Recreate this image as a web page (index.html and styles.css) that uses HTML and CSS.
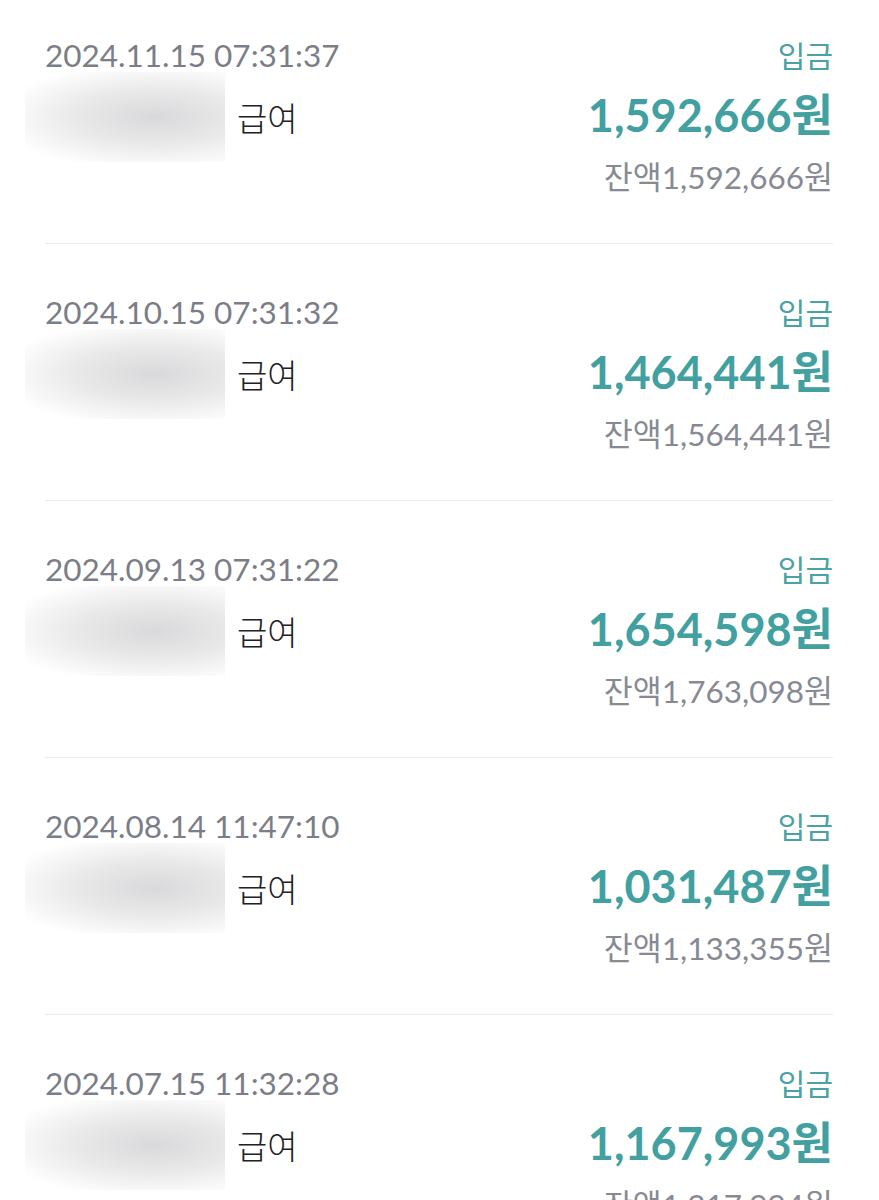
FILE: index.html
```html
<!DOCTYPE html>
<html lang="ko">
<head>
  <meta charset="UTF-8" />
  <meta name="viewport" content="width=device-width, initial-scale=1" />
  <title>거래내역</title>
  <link rel="stylesheet" href="styles.css">
</head>
<body>
  <ul class="history">
    <li class="item">
      <div class="left">
        <div class="date">2024.11.15 07:31:37</div>
        <div class="name"><span class="masked"></span>급여</div>
      </div>
      <div class="right">
        <div class="type">입금</div>
        <div class="amount">1,592,666원</div>
        <div class="balance">잔액1,592,666원</div>
      </div>
    </li>
    <li class="item">
      <div class="left">
        <div class="date">2024.10.15 07:31:32</div>
        <div class="name"><span class="masked"></span>급여</div>
      </div>
      <div class="right">
        <div class="type">입금</div>
        <div class="amount">1,464,441원</div>
        <div class="balance">잔액1,564,441원</div>
      </div>
    </li>
    <li class="item">
      <div class="left">
        <div class="date">2024.09.13 07:31:22</div>
        <div class="name"><span class="masked"></span>급여</div>
      </div>
      <div class="right">
        <div class="type">입금</div>
        <div class="amount">1,654,598원</div>
        <div class="balance">잔액1,763,098원</div>
      </div>
    </li>
    <li class="item">
      <div class="left">
        <div class="date">2024.08.14 11:47:10</div>
        <div class="name"><span class="masked"></span>급여</div>
      </div>
      <div class="right">
        <div class="type">입금</div>
        <div class="amount">1,031,487원</div>
        <div class="balance">잔액1,133,355원</div>
      </div>
    </li>
    <li class="item">
      <div class="left">
        <div class="date">2024.07.15 11:32:28</div>
        <div class="name"><span class="masked"></span>급여</div>
      </div>
      <div class="right">
        <div class="type">입금</div>
        <div class="amount">1,167,993원</div>
        <div class="balance">잔액1,217,994원</div>
      </div>
    </li>
  </ul>
</body>
</html>
```

FILE: styles.css
```css
body {
  margin: 0;
  background: #fff;
  font-family: Lato, "Noto Sans CJK KR", sans-serif;
  overflow: hidden;
}
.history {
  list-style: none;
  margin: 0 46px 0 45px;
  padding: 0;
}
.item {
  display: flex;
  justify-content: space-between;
  padding: 43px 0 39px;
  border-bottom: 1px solid #e9e9eb;
}
.item:first-child {
  padding-top: 30px;
}
.left {
  display: flex;
  flex-direction: column;
}
.date {
  height: 50px;
  line-height: 50px;
  font-size: 31.5px;
  color: #7b7e87;
  white-space: nowrap;
}
.name {
  display: flex;
  align-items: center;
  height: 74px;
  font-size: 33px;
  font-weight: 300;
  color: #222224;
}
.masked {
  display: inline-block;
  width: 200px;
  height: 90px;
  margin-left: -20px;
  margin-right: 12px;
  background: radial-gradient(ellipse 80% 60% at 65% 50%, #d9d9db 0%, #e9e9ea 50%, rgba(255, 255, 255, 0) 100%);
}
.right {
  display: flex;
  flex-direction: column;
  align-items: flex-end;
}
.type {
  height: 50px;
  line-height: 50px;
  font-size: 30px;
  color: #4aa2a2;
}
.amount {
  height: 70px;
  line-height: 70px;
  font-size: 45px;
  font-weight: 700;
  color: #42a0a0;
  white-space: nowrap;
}
.balance {
  height: 54px;
  line-height: 54px;
  font-size: 31.5px;
  color: #878a93;
  white-space: nowrap;
}
```
